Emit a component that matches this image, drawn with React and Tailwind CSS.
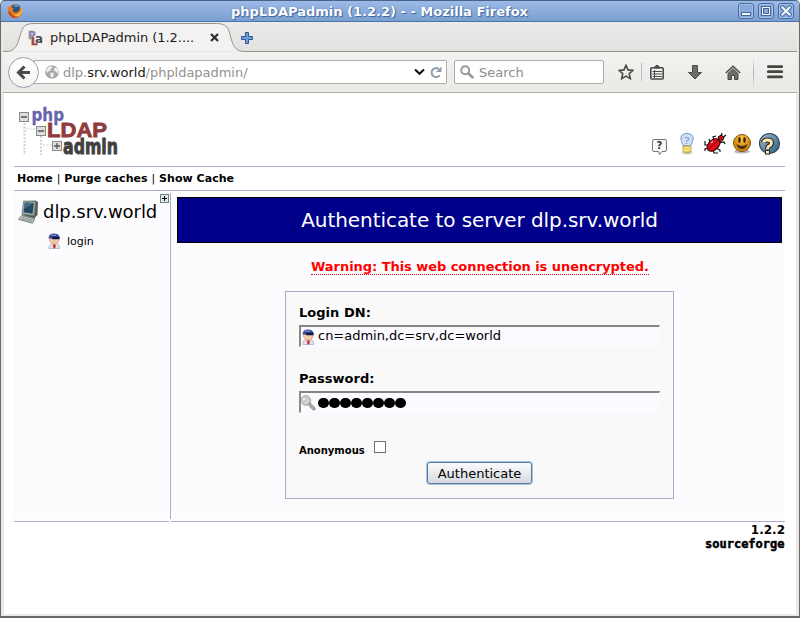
import React from "react";

function FirefoxIcon() {
  return (
    <svg className="h-4 w-4" viewBox="0 0 16 16">
      <circle cx="8" cy="8" r="7" fill="#e8701a" />
      <circle cx="8.8" cy="6.2" r="4.8" fill="#24558f" />
      <path d="M7 1.6Q10 .8 12 3l-2 1-3-.6z" fill="#5aa0cc" />
      <path d="M1.2 3.2L2.6 4.6 5 4.2 6.6 6 5.4 7.4 7 9.2Q10 10.6 12.4 7.6L13 3.4Q15.8 7 14.4 10.6 12 15 8 15 2.4 14.6 1.1 9.6z" fill="#ee7d1c" />
      <path d="M13 3.6Q15 6.5 13.2 9.6 10.6 13 6.6 11.6 9 13.8 12 12.8 15 10.6 14.8 7 14.4 5 13 3.6z" fill="#fbc63c" />
      <path d="M1.2 8Q2 12.6 6 14.4 9 15.2 11 14.2 5 13.6 3.4 9z" fill="#c43d18" />
    </svg>
  );
}

function WindowButton({ kind }) {
  return (
    <svg className="h-4 w-4" viewBox="0 0 16 16">
      <rect x=".5" y=".5" width="15" height="15" rx="2.5" fill="#86a9d9" stroke="#45699d" />
      <rect x="1.5" y="1.5" width="13" height="13" rx="1.5" fill="none" stroke="#a6c1e8" />
      {kind === "min" && <rect x="3.5" y="9.5" width="9" height="3" fill="#f4f8fd" stroke="#45699d" />}
      {kind === "max" && (
        <>
          <rect x="3.5" y="3.5" width="9" height="9" fill="#f4f8fd" stroke="#45699d" />
          <rect x="5.5" y="5.5" width="5" height="5" fill="#86a9d9" stroke="#45699d" />
        </>
      )}
      {kind === "close" && (
        <>
          <path d="M4.5 4.5l7 7M11.5 4.5l-7 7" stroke="#45699d" strokeWidth="4" strokeLinecap="square" />
          <path d="M4.5 4.5l7 7M11.5 4.5l-7 7" stroke="#f4f8fd" strokeWidth="2.2" strokeLinecap="square" />
        </>
      )}
    </svg>
  );
}

function TitleBar() {
  return (
    <div className="flex h-[22px] shrink-0 items-center rounded-t-[4px] border-t border-b border-t-[#4a6388] border-b-[#4a75ab] bg-linear-to-b from-[#9cbae7] to-[#799fd1] pl-[6px] pr-[5px]">
      <FirefoxIcon />
      <div className="flex-1 pr-[2px] text-center">
        <span className="text-[13px] leading-[20px] font-bold whitespace-nowrap text-white [text-shadow:1px_1px_1px_#3f659b,0_0_1px_#3f659b]">
          phpLDAPadmin (1.2.2) - - Mozilla Firefox
        </span>
      </div>
      <div className="flex gap-1">
        <WindowButton kind="min" />
        <WindowButton kind="max" />
        <WindowButton kind="close" />
      </div>
    </div>
  );
}

function TabStrip() {
  return (
    <div className="relative h-[30px] shrink-0 bg-linear-to-b from-[#ebeae8] to-[#e2e1df]">
      <svg className="absolute inset-0 h-[30px] w-full" viewBox="0 0 796 30" preserveAspectRatio="none">
        <path d="M2 29.5C13 29.5 14.5 22 17 14 19.5 5 21.5 1.5 31 1.5H214C224 1.5 226 6 228 14 230 22 232 29.5 242 29.5" fill="#f3f2f0" />
        <path d="M0 29.5H3C13 29.5 14.5 22 17 14 19.5 5 21.5 1.5 31 1.5H214C224 1.5 226 6 228 14 230 22 232 29.5 242 29.5H796" fill="none" stroke="#96948f" />
      </svg>
      <div className="relative flex h-full items-center pl-[25px]">
        <svg className="mt-[2px] h-4 w-4" viewBox="0 0 16 16">
          <text x="0" y="8.500" fontSize="10.500" fontWeight="bold" fontFamily="DejaVu Sans" fill="#8886aa" stroke="#8886aa" strokeWidth=".4">P</text>
          <text x="3" y="15" fontSize="10" fontWeight="bold" fontFamily="DejaVu Sans" fill="#9b4545" stroke="#9b4545" strokeWidth=".6">L</text>
          <text x="7" y="13" fontSize="13" fontWeight="bold" fontFamily="DejaVu Sans" fill="#4c4a4b" textLength="8" lengthAdjust="spacingAndGlyphs">a</text>
        </svg>
        <span className="ml-[6px] w-[160px] pt-[2px] text-[13px] tracking-[-0.04px] whitespace-nowrap text-[#1c1c1c]">phpLDAPadmin (1.2....</span>
        <svg className="mt-px h-[9px] w-[9px]" viewBox="0 0 9 9">
          <path d="M1 1l7 7M8 1L1 8" stroke="#30302f" strokeWidth="2.3" />
        </svg>
        <svg className="mt-[2px] ml-[22px] h-[12px] w-[12px]" viewBox="0 0 12 12">
          <path d="M4.500.500h3v4h4v3h-4v4h-3v-4h-4v-3h4z" fill="#6f9cd2" stroke="#285a97" />
        </svg>
      </div>
    </div>
  );
}

function NavBar() {
  return (
    <div className="flex h-[41px] shrink-0 items-center border-b border-[#aeaba6] bg-linear-to-b from-[#f3f2f0] to-[#eae9e6] pl-[5px]">
      <div className="z-10 flex h-[31px] w-[31px] shrink-0 items-center justify-center rounded-full border border-[#93a0b0] bg-linear-to-b from-white to-[#f3f3f2]">
        <svg className="h-[15px] w-[15px]" viewBox="0 0 15 15">
          <path d="M14 7.500H3M8.500 1.500l-6 6 6 6" fill="none" stroke="#494947" strokeWidth="3" />
        </svg>
      </div>
      <div className="-ml-[5px] flex h-[24px] w-[413px] shrink-0 items-center rounded-r-[2px] border border-[#aeaba6] bg-white pl-[10px]">
        <svg className="h-[14px] w-[14px] shrink-0" viewBox="0 0 14 14">
          <circle cx="7" cy="7" r="6.800" fill="#a8a8a8" />
          <path d="M1 5l2-2.500L6 1l1.500 1.500L6 4l-1 2-2 .5-.5 2zM5.500 7.500l3 .5.5 2-2 3L5.500 11zM9 3l3-.5 1.500 3-1 3.500-1.500-2.500-2-.500z" fill="#efefef" />
        </svg>
        <div className="ml-[4px] flex-1 pt-px text-[13px] tracking-[-0.03px] whitespace-nowrap text-[#919191]">
          dlp.<span className="text-[#171717]">srv.world</span>/phpldapadmin/
        </div>
        <svg className="h-[8px] w-[11px]" viewBox="0 0 11 8">
          <path d="M1 1.500l4.500 4.200L10 1.500" fill="none" stroke="#111" strokeWidth="2.100" />
        </svg>
        <svg className="mr-[4px] ml-[5px] h-[13px] w-[12px]" viewBox="0 0 12 13">
          <path d="M9.800 9.200A4.500 4.500 0 1 1 8.800 3" fill="none" stroke="#929cab" strokeWidth="2" />
          <path d="M11.500.500V6H6z" fill="#929cab" />
        </svg>
      </div>
      <div className="ml-[7px] flex h-[24px] w-[150px] shrink-0 items-center rounded-[2px] border border-[#aeaba6] bg-white pl-[5px]">
        <svg className="h-[14px] w-[14px]" viewBox="0 0 14 14">
          <circle cx="5.200" cy="5.200" r="4" fill="none" stroke="#999" strokeWidth="2" />
          <path d="M8 8l5.200 5" stroke="#999" strokeWidth="2.600" />
        </svg>
        <span className="ml-[5px] pt-px text-[13px] text-[#8c8c8c]">Search</span>
      </div>
      <svg className="ml-[14px] h-[16px] w-[16px] shrink-0" viewBox="0 0 16 16">
        <path d="M8 1.300l2 4.600 4.900.5-3.700 3.300 1.100 4.900L8 12.100l-4.300 2.500 1.100-4.900L1.100 6.400 6 5.900z" fill="none" stroke="#4a4a49" strokeWidth="1.600" />
      </svg>
      <div className="ml-[7px] h-[18px] w-px shrink-0 bg-[#b8c0c9]" />
      <svg className="ml-[8px] h-[15px] w-[14px] shrink-0" viewBox="0 0 14 15">
        <rect x=".8" y="2.800" width="12.400" height="11.200" rx="1" fill="#f3f3f2" stroke="#4a4a49" strokeWidth="1.600" />
        <path d="M4 3V2h1.500L6 .5h2L8.500 2H10v1z" fill="#4a4a49" stroke="#4a4a49" />
        <path d="M2.500 6.500H12M2.500 9H12M2.500 11.500H12M4.500 5v8" stroke="#4a4a49" />
      </svg>
      <svg className="ml-[24px] h-[15px] w-[14px] shrink-0" viewBox="0 0 14 15">
        <path d="M4.500.500h5v7h4L7 14 .5 7.500h4z" fill="#6c6c6b" stroke="#4a4a49" />
      </svg>
      <svg className="ml-[23px] h-[15px] w-[16px] shrink-0" viewBox="0 0 16 15">
        <path d="M3 14.500V8.500l5-4.800 5 4.800v6H9.500v-4h-3v4z" fill="#6c6c6b" stroke="#4a4a49" />
        <path d="M.8 8L8 1.300 15.200 8" fill="none" stroke="#4a4a49" strokeWidth="1.500" />
      </svg>
      <div className="ml-[12px] h-[31px] w-px shrink-0 bg-linear-to-b from-[#f0f0ef] via-[#a4b0bf] to-[#ecebe9]" />
      <svg className="ml-[13px] h-[14px] w-[16px] shrink-0" viewBox="0 0 16 14">
        <path d="M1.300 1.600h13.400M1.300 6.700h13.400M1.300 11.800h13.400" stroke="#454544" strokeWidth="2.700" strokeLinecap="round" />
      </svg>
    </div>
  );
}

function Logo() {
  return (
    <svg className="h-[50px] w-[102px] overflow-visible" viewBox="0 0 102 50">
      <g stroke="#cfcfcf" strokeWidth="2" strokeDasharray="2 1.5">
        <path d="M5.500 16v32M22 29v19" />
        <path d="M7 22h9M24 38h9" strokeWidth="1" />
      </g>
      <g fill="#dedede" stroke="#8a8a8a">
        <rect x=".5" y="5.500" width="9" height="9" />
        <rect x="17.500" y="19.500" width="9" height="9" />
        <rect x="33.500" y="34.500" width="9" height="9" />
      </g>
      <path d="M2 10h6M19 24h6M35 39h6M38 36v6" stroke="#555" strokeWidth="1.300" />
      <text x="12.500" y="14" fontFamily="DejaVu Sans" fontWeight="bold" fontSize="17" fill="#6564ac" stroke="#6564ac" strokeWidth=".3" textLength="32.500" lengthAdjust="spacingAndGlyphs">php</text>
      <text x="28" y="29.500" fontFamily="Liberation Sans" fontWeight="bold" fontSize="20.500" fill="#903b3d" stroke="#903b3d" strokeWidth=".8" textLength="60" lengthAdjust="spacingAndGlyphs">LDAP</text>
      <text x="44" y="46.500" fontFamily="DejaVu Sans" fontWeight="bold" fontSize="21.500" fill="#404041" stroke="#404041" strokeWidth=".9" textLength="55" lengthAdjust="spacingAndGlyphs">admin</text>
    </svg>
  );
}

function ToolIcons() {
  return (
    <div className="flex items-start gap-[4px]">
      <svg className="h-6 w-6" viewBox="0 0 24 24">
        <path d="M7 7.500h11q1.500 0 1.500 1.500v9q0 1.500-1.500 1.500h-3l-2.500 3-1-3H7q-1.500 0-1.500-1.500V9q0-1.500 1.500-1.500z" fill="#f8f8f8" stroke="#777" />
        <text x="9.500" y="17" fontFamily="DejaVu Sans" fontWeight="bold" fontSize="10" fill="#333">?</text>
      </svg>
      <svg className="h-6 w-6" viewBox="0 0 24 24">
        <ellipse cx="12" cy="20.500" rx="6" ry="2" fill="#ddd" />
        <path d="M8.500 14L6.500 9.500Q4.500 4 8.500 2.200 12 .5 15.500 2.200 19.500 4 17.500 9.500L15.500 14z" fill="#cfe0f7" stroke="#7198d4" />
        <text x="9" y="12" fontFamily="DejaVu Serif" fontSize="10" fill="#6387bd">?</text>
        <path d="M8 14h8v5l-2 2h-4l-2-2z" fill="#e8ca50" stroke="#a38b36" strokeWidth=".8" />
        <path d="M8 16l8-1M8 18.500l8-1" stroke="#fff4a7" />
      </svg>
      <svg className="h-6 w-6" viewBox="0 0 24 24">
        <g fill="none" stroke="#111" strokeWidth="1.200">
          <path d="M5 13H2V9M7 10L6 7M10 18l1 3h4M13 16l4 2v2M5 16l-3 1v2M11 8L10 5l3-1M16 11l5-1 1 2M18 5l1-4M19 6l4-3" />
        </g>
        <path d="M15 5l3-2 3 2-1 3-3 2z" fill="#c80c12" stroke="#111" />
        <ellipse cx="10.500" cy="13" rx="7.500" ry="5" transform="rotate(-42 10.500 13)" fill="#e10b18" stroke="#210708" />
        <path d="M6 17l9-8.500" stroke="#6c0408" />
        <path d="M8 11l2-2" stroke="#ff9999" strokeWidth="1.500" />
      </svg>
      <svg className="h-6 w-6" viewBox="1 0 24 24">
        <defs><radialGradient id="smile" cy=".25"><stop stopColor="#ffc84a" /><stop offset="1" stopColor="#d58910" /></radialGradient></defs>
        <ellipse cx="12" cy="19.500" rx="8" ry="2" fill="#bbb" />
        <circle cx="12" cy="11" r="8.500" fill="url(#smile)" stroke="#7d5512" />
        <path d="M6.500 12q1 5 5.500 5t5.500-5q-5.500 4-11 0z" fill="#4a310b" />
        <path d="M9.500 6.500v3M14.500 6.500v3" stroke="#302006" strokeWidth="2.300" strokeLinecap="round" />
      </svg>
      <svg className="h-6 w-6" viewBox="1 -1 24 24">
        <defs><linearGradient id="help" y2="1"><stop stopColor="#a4bed0" /><stop offset="1" stopColor="#2a577e" /></linearGradient></defs>
        <circle cx="11.500" cy="10.500" r="10" fill="url(#help)" stroke="#2f4258" strokeWidth="1.200" />
        <path d="M5.500 9.500Q6 7 9.500 7q4 0 4 3 0 2-3 3.500-1 1-1 2.500" fill="none" stroke="#2b281f" strokeWidth="5" />
        <path d="M5.500 9.500Q6 7 9.500 7q4 0 4 3 0 2-3 3.500-1 1-1 2.500" fill="none" stroke="#fae8ae" strokeWidth="2.800" />
        <rect x="7.500" y="17.500" width="4" height="3.600" fill="#fae8ae" stroke="#2b281f" />
      </svg>
    </div>
  );
}

function UserIcon() {
  return (
    <svg className="h-4 w-4 shrink-0" viewBox="0 0 16 16">
      <path d="M3 15.500q-.3-4.500 3-4.500h4.500q3.300 0 3 4.500z" fill="#dfe4ec" stroke="#a3aec2" strokeWidth=".8" />
      <path d="M3.500 5h9.500v2.500q-1 3.800-4.700 3.800T3.500 7.500z" fill="#f3c8a6" stroke="#cf9a76" strokeWidth=".6" />
      <path d="M2.500 4.800Q3 .4 8 .4t5.700 4.400v.7H3z" fill="#3c4b98" />
      <path d="M5.500 3.800h8v2.500H6.500z" fill="#12194f" />
      <path d="M5 2.200h5" stroke="#8f9cd0" />
      <path d="M7.500 11.300h1.800l.6 2.500-1.500 1.900-1.500-1.900z" fill="#d62a27" />
    </svg>
  );
}

function ComputerIcon() {
  return (
    <svg className="h-6 w-[22px] shrink-0" viewBox="0 0 22 24">
      <path d="M5.500 1l12-.5 2.500 1.500-.5 13-3.500 3.500L4 15z" fill="#56605b" />
      <path d="M5.500 1l12 .8L16 15.500 4 14z" fill="#a4afa8" stroke="#727d76" strokeWidth=".7" />
      <path d="M6.800 2.500l9 .6-1.200 10.600L5.500 12.300z" fill="#244865" />
      <path d="M6.800 2.500l9 .6L6 9z" fill="#456b86" />
      <path d="M3.500 15.500L17 18.500l-2.500 4.800L.5 19.300z" fill="#c0c9c3" stroke="#66736b" strokeWidth=".8" />
      <path d="M4 17.500l11 2.500M3 19l11 2.500" stroke="#75827b" strokeWidth=".7" />
    </svg>
  );
}

function KeyIcon() {
  return (
    <svg className="h-4 w-4 shrink-0" viewBox="0 0 16 16">
      <circle cx="5.800" cy="5.500" r="4.800" fill="#cbcbcb" stroke="#a5a5a5" />
      <path d="M8 9.500L9.800 7.500l5.400 5.300-.2 2.200-2.600-.3-.4-1.500-1.600-.2-.3-1.600z" fill="#a8a8a8" stroke="#8d8d8d" strokeWidth=".8" />
      <circle cx="4" cy="4.200" r="1.200" fill="#f3f3f3" />
      <path d="M5 8q3 0 4-3" fill="none" stroke="#e2e2e2" />
    </svg>
  );
}

function Field({ label, icon, children }) {
  return (
    <div className="h-[66px]">
      <div className="h-[22px] text-[13px] leading-[16px] font-bold tracking-[0.03px]">{label}</div>
      <div className="-mt-[2px] flex h-[22px] w-[361px] items-center border-t-2 border-l-2 border-t-[#848480] border-l-[#898985] border-r border-b border-r-[#fbfaff] border-b-[#fbfaff] bg-[#fbfaff]">
        <span className="mt-px -ml-px">{icon}</span>
        <span className="-mt-px ml-[2px] text-[13px] leading-[16px] tracking-[-0.02px] whitespace-nowrap">{children}</span>
      </div>
    </div>
  );
}

function LoginForm() {
  return (
    <div className="h-[208px] w-[389px] border border-[#aaa9ce] bg-[#f9f9f9] pt-[13px] pl-[13px]">
      <Field label="Login DN:" icon={<UserIcon />}>cn=admin,dc=srv,dc=world</Field>
      <Field label="Password:" icon={<KeyIcon />}>
        <span className="flex pt-[2px]">
          {Array.from({ length: 8 }, (_, i) => (
            <i key={i} className="mr-[0.5px] block h-[10.5px] w-[10.5px] rounded-full bg-black" />
          ))}
        </span>
      </Field>
      <div className="flex h-[38px] items-start">
        <span className="w-[75px] pt-[7px] text-[10px] leading-[14px] font-bold">Anonymous</span>
        <span className="mt-[4px] h-[12px] w-[12px] border border-[#73736c] bg-white" />
      </div>
      <button className="-mt-[13px] ml-[128px] block h-[22px] w-[105px] rounded-[3px] border border-[#55799f] bg-linear-to-b from-[#fafbfc] to-[#d6dadf] pt-px text-[13px] leading-[20px] shadow-[0_0_0_1px_#a8c4e3]">
        Authenticate
      </button>
    </div>
  );
}

function Sidebar() {
  return (
    <aside className="flex h-[326px] w-[157px] shrink-0 items-start border-r border-[#aaa9ce] bg-[#fcfcfe]">
      <div className="w-[146px] pt-[7px]">
        <div className="flex items-center pl-[4px]">
          <ComputerIcon />
          <span className="ml-[3px] text-[18px] leading-[24px] tracking-[-0.05px] whitespace-nowrap">dlp.srv.world</span>
        </div>
        <div className="mt-[7px] flex items-center pl-[32px]">
          <UserIcon />
          <span className="ml-[5px] pt-[3px] text-[11px] leading-[16px]">login</span>
        </div>
      </div>
      <svg className="mt-px h-[9px] w-[9px] shrink-0" viewBox="0 0 9 9">
        <rect x=".5" y=".5" width="8" height="8" fill="#dfe9ef" stroke="#747f85" />
        <path d="M2 4.500h5M4.500 2v5" stroke="#000" />
      </svg>
    </aside>
  );
}

export default function App() {
  return (
    <div className="h-[618px] w-[800px] overflow-hidden bg-white font-['DejaVu_Sans',sans-serif] text-black">
      <div className="flex h-full flex-col rounded-t-[5px] border-r border-b-2 border-l border-[#6b6967] bg-[#ebe9e6]">
        <TitleBar />
        <div className="mr-[2px] ml-[2px] flex flex-1 flex-col">
          <TabStrip />
          <NavBar />
          <div className="mb-[2px] ml-px mr-px flex flex-1 flex-col bg-white pr-[11px] pl-[10px]">
            <header className="flex h-[73px] items-start justify-between pt-[14px] pl-[5px]">
              <Logo />
              <div className="mt-[25px] mr-[2px]"><ToolIcons /></div>
            </header>
            <nav className="h-[25px] border-y border-[#aaa9ce] pl-[3px] text-[11px] leading-[23px] font-bold tracking-[0.04px] whitespace-nowrap">
              Home <span className="font-normal">|</span> Purge caches <span className="font-normal">|</span> Show Cache
            </nav>
            <main className="mt-[2px] flex h-[326px]">
              <Sidebar />
              <section className="flex flex-1 flex-col items-center bg-[#fcfcfe] pt-[4px] pr-[3px] pl-[6px]">
                <h1 className="h-[46px] w-full border border-black bg-[#00008b] text-center text-[20px] leading-[45px] tracking-[-0.06px] text-white">
                  Authenticate to server dlp.srv.world
                </h1>
                <div className="mt-[16px] mb-[16px] ml-px h-[16px] border-b border-dotted border-red-600 text-[13px] leading-[16px] font-bold tracking-[-0.05px] whitespace-nowrap text-[#ff0000]">
                  Warning: This web connection is unencrypted.
                </div>
                <LoginForm />
              </section>
            </main>
            <div className="mt-[2px] flex gap-[2px]">
              <div className="h-px w-[155px] bg-[#aaa9ce]" />
              <div className="h-px flex-1 bg-[#aaa9ce]" />
            </div>
            <footer className="flex flex-col items-end">
              <div className="h-[16px] text-[12px] leading-[17px] font-bold">1.2.2</div>
              <svg className="h-[14px] w-[80px] overflow-visible" viewBox="0 0 80 14">
                <text x="0" y="10" fontFamily="DejaVu Sans Mono" fontWeight="bold" fontSize="12.5" stroke="#000" strokeWidth=".5" textLength="79.5" lengthAdjust="spacingAndGlyphs">sourceforge</text>
              </svg>
            </footer>
          </div>
        </div>
      </div>
    </div>
  );
}
